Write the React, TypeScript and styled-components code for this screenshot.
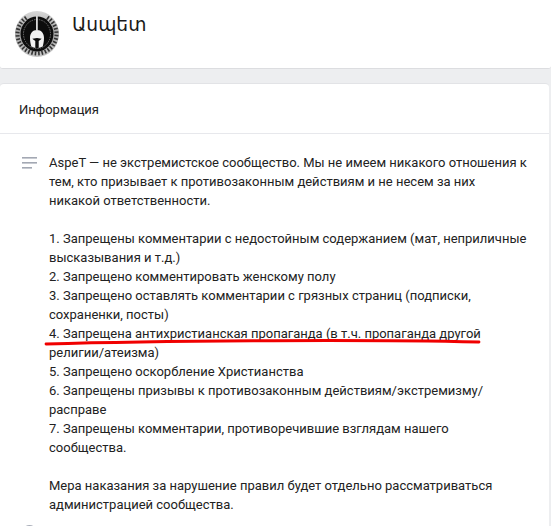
import styled, { createGlobalStyle } from 'styled-components'

const GlobalStyle = createGlobalStyle`
  html, body {
    margin: 0;
    padding: 0;
    background: #edeef0;
    overflow: hidden;
  }
  body {
    font-family: Roboto, "Noto Sans", "DejaVu Sans", sans-serif;
    color: #000;
  }
`

const Page = styled.div`
  width: 551px;
  height: 526px;
  overflow: hidden;
  display: flex;
  flex-direction: column;
  background: #edeef0;
`

const Header = styled.header`
  height: 69px;
  flex: none;
  box-sizing: border-box;
  padding: 11px 0 0 15px;
  display: flex;
  gap: 13px;
  background: #fff;
  border-bottom: 1px solid #dcdde0;
  border-radius: 0 0 3px 3px;
`

const Title = styled.h1`
  margin: 3px 0 0;
  font-family: "DejaVu Sans", sans-serif;
  font-size: 18.7px;
  line-height: 22px;
  font-weight: 400;
  color: #1a1a1a;
`

const Card = styled.main`
  margin-top: 14px;
  margin-right: 2px;
  flex: 1;
  background: #fff;
  border-top: 1px solid #e2e3e6;
  border-radius: 4px 4px 0 0;
`

const SectionHead = styled.div`
  height: 50px;
  box-sizing: border-box;
  padding: 17px 0 0 19px;
  font-size: 13px;
  line-height: 18px;
  color: #222;
  border-bottom: 1px solid #e7e8ec;
`

const Body = styled.section`
  position: relative;
  display: flex;
  padding: 19px 0 0 22px;
`

const InfoIcon = styled.svg`
  flex: none;
  width: 15px;
  height: 12px;
  margin-top: 4px;
  margin-right: 12px;
`

const Text = styled.p`
  margin: 0;
  font-size: 13px;
  line-height: 19px;
  color: #222;
  white-space: pre-line;
`

const Marker = styled.svg`
  position: absolute;
  left: 0;
  top: 0;
  width: 551px;
  height: 300px;
  pointer-events: none;
`

const BottomIcon = styled.div`
  position: absolute;
  left: 22px;
  top: 391px;
  width: 15px;
  height: 15px;
  border-radius: 50%;
  background: #a8adb8;
`

const rules = `AspeT — не экстремистское сообщество. Мы не имеем никакого отношения к
тем, кто призывает к противозаконным действиям и не несем за них
никакой ответственности.

1. Запрещены комментарии с недостойным содержанием (мат, неприличные
высказывания и т.д.)
2. Запрещено комментировать женскому полу
3. Запрещено оставлять комментарии с грязных страниц (подписки,
сохраненки, посты)
4. Запрещена антихристианская пропаганда (в т.ч. пропаганда другой
религии/атеизма)
5. Запрещено оскорбление Христианства
6. Запрещены призывы к противозаконным действиям/экстремизму/
расправе
7. Запрещены комментарии, противоречившие взглядам нашего
сообщества.

Мера наказания за нарушение правил будет отдельно рассматриваться
администрацией сообщества.`

// laurel leaves round the badge, leaving the top open
const leaves = Array.from({ length: 30 }, (_, i) => 35 + i * 10)

function Logo() {
  return (
    <svg width="44" height="46" viewBox="0 0 44 46" style={{ flex: 'none' }}>
      <defs>
        <linearGradient id="rim" x1="0" y1="0" x2="0" y2="1">
          <stop offset="0" stopColor="#d8d8d8" />
          <stop offset="0.45" stopColor="#a8a8a8" />
          <stop offset="1" stopColor="#c4c4c4" />
        </linearGradient>
        <filter id="soft">
          <feGaussianBlur stdDeviation="0.35" />
        </filter>
      </defs>
      <g filter="url(#soft)">
        <ellipse cx="22" cy="23" rx="22" ry="23" fill="url(#rim)" />
        {leaves.map(a => (
          <rect key={a} x="21" y="1.5" width="1.6" height="4" fill="#333" transform={`rotate(${a} 22 23)`} />
        ))}
        <ellipse cx="22" cy="23" rx="16.5" ry="17.5" fill="#0c0c0c" />
        <ellipse cx="22" cy="23" rx="13.5" ry="14.500" fill="none" stroke="#8a8a8a" strokeWidth="0.8" strokeDasharray="1.5 1" />
        <rect x="21" y="5" width="1.8" height="14" fill="#d8d8d8" />
        <path d="M22 19c-4.500 0-7 3.500-7 8 0 3.500.7 6.500 1.300 8.500l4 1.500v-7l-3-2.200 4.700-.8 4.700.8-3 2.200v7l4-1.500c.6-2 1.300-5 1.300-8.500 0-4.500-2.500-8-7-8z" fill="#f2f2f2" />
      </g>
    </svg>
  )
}

export default function App() {
  return (
    <Page>
      <GlobalStyle />
      <Header>
        <Logo />
        <Title>Ասպետ</Title>
      </Header>
      <Card>
        <SectionHead>Информация</SectionHead>
        <Body>
          <InfoIcon viewBox="0 0 15 12">
            <rect x="0" y="0" width="15" height="1.6" fill="#a3a8b3" />
            <rect x="0" y="5" width="15" height="1.6" fill="#a3a8b3" />
            <rect x="0" y="10" width="10" height="1.6" fill="#a3a8b3" />
          </InfoIcon>
          <Text>{rules}</Text>
          <Marker viewBox="0 0 551 300">
            <path d="M46 210 C 150 207, 350 205, 479 208" fill="none" stroke="#f00000" strokeWidth="2.8" strokeLinecap="round" />
          </Marker>
          <BottomIcon />
        </Body>
      </Card>
    </Page>
  )
}
